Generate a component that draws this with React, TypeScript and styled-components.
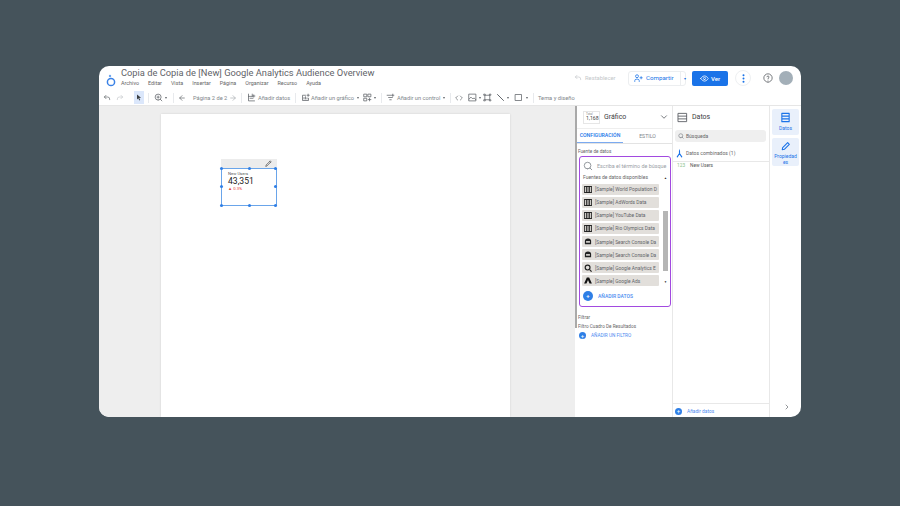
import React from "react";
import styled, { createGlobalStyle } from "styled-components";

const Global = createGlobalStyle`
  html, body { margin: 0; padding: 0; background: #45535b; font-family: Roboto, "Liberation Sans", sans-serif; }
  * { box-sizing: border-box; }
`;
const Stage = styled.div`
  width: 900px; height: 506px; padding: 66px 99px 89px; background: #45535b; overflow: hidden;
`;
const Win = styled.div`
  width: 702px; height: 351px; background: #fff; border-radius: 10px; overflow: hidden;
  display: flex; flex-direction: column;
`;
const Header = styled.header`
  height: 24px; display: flex; align-items: center; flex: none;
`;
const Logo = styled.div`
  width: 22px; flex: none; display: flex; justify-content: center; padding: 5px 0 0 2px;
`;
const TitleBlock = styled.div`
  flex: 1; align-self: flex-start; display: flex; flex-direction: column; padding-top: 1px;
`;
const Title = styled.div`
  font-size: 9.3px; line-height: 12px; color: #5f6368; white-space: nowrap;
`;
const Menu = styled.div`
  display: flex; gap: 9px; font-size: 5.4px; line-height: 9px; color: #666;
`;
const HeadActions = styled.div`
  display: flex; align-items: center; height: 24px;
`;
const Reset = styled.div`
  display: flex; align-items: center; gap: 3px; font-size: 5.8px; color: #c4c7ca; margin-right: 11px; width: 43px; white-space: nowrap;
`;
const Share = styled.div`
  width: 58px; height: 15px; border: 1px solid #eceef0; border-radius: 3px; display: flex; align-items: center;
  color: #1a73e8; font-size: 6.2px; font-weight: 400; padding-left: 5px; gap: 3px; margin-right: 6px; white-space: nowrap;
`;
const ShareCaret = styled.span`
  margin-left: 3px; padding-left: 3px; border-left: 1px solid #eceef0; font-size: 4px; line-height: 13px; color: #1a73e8;
`;
const View = styled.div`
  width: 36px; height: 15px; background: #1a73e8; border-radius: 2px; color: #fff; font-size: 6px; font-weight: 500;
  display: flex; align-items: center; justify-content: center; gap: 2px; margin-right: 7px;
`;
const More = styled.div`
  width: 16px; height: 16px; border-radius: 50%; border: 1px solid #eef0f2; display: flex; align-items: center;
  justify-content: center; margin-right: 12px;
`;
const Avatar = styled.div`
  width: 14px; height: 14px; border-radius: 50%; background: #a3afb8; margin: 0 8px 0 6px;
`;
const Toolbar = styled.div`
  height: 16px; flex: none; display: flex; align-items: center; font-size: 5.7px; color: #80868b;
  border-bottom: 1px solid #e6e6e6; padding-left: 4px; white-space: nowrap;
`;
const Sep = styled.span<{ $m?: number }>`
  width: 1px; height: 10px; background: #e8eaed; margin: 0 ${(p) => p.$m ?? 4}px; flex: none;
`;
const ToolText = styled.span<{ $ml?: number; $w?: number }>`
  margin-left: ${(p) => p.$ml ?? 0}px; ${(p) => (p.$w ? `width:${p.$w}px;` : "")}
`;
const IconSlot = styled.span<{ $w?: number; $active?: boolean; $ml?: number; $mr?: number }>`
  width: ${(p) => p.$w ?? 12}px; height: 13px; display: inline-flex; align-items: center; justify-content: center; flex: none;
  margin-left: ${(p) => p.$ml ?? 0}px; margin-right: ${(p) => p.$mr ?? 0}px;
  background: ${(p) => (p.$active ? "#dbe7fb" : "transparent")}; color: #5f6368;
`;
const Caret = styled.span`
  width: 0; height: 0; border-left: 1.5px solid transparent; border-right: 1.5px solid transparent;
  border-top: 2px solid #5f6368; display: inline-block; flex: none; margin: 0 2px;
`;
const Main = styled.div`
  flex: 1; display: flex; min-height: 0;
`;
const Canvas = styled.div`
  width: 476px; flex: none; background: #eeeeee; padding: 8px 0 0 62px; position: relative;
`;
const Page = styled.div`
  width: 349px; height: 303px; background: #fff; position: relative;
  box-shadow: 0 0 2px rgba(0,0,0,.12);
`;
const ChartBar = styled.div`
  position: absolute; left: 60px; top: 45px; width: 56px; height: 9px; background: #ececec;
  display: flex; justify-content: flex-end; align-items: center; padding-right: 5px;
`;
const Scorecard = styled.div`
  position: absolute; left: 60px; top: 54px; width: 56px; height: 38px; border: 1px solid #6aa5ea; padding: 2px 0 0 6px;
`;
const Handle = styled.i<{ $x: number; $y: number }>`
  position: absolute; width: 3px; height: 3px; background: #2f7fe6; border-radius: 50%;
  left: ${(p) => p.$x}px; top: ${(p) => p.$y}px;
`;
const CardLabel = styled.div`
  font-size: 4.2px; line-height: 5px; color: #555;
`;
const CardValue = styled.div`
  font-size: 8.6px; line-height: 10px; color: #222;
`;
const CardDelta = styled.div`
  font-size: 4.2px; line-height: 6px; color: #e8453c;
`;
const Scroll = styled.div`
  width: 2px; flex: none; background: linear-gradient(#a9a9a9 0 222px, #fff 222px);
`;
const Props = styled.section`
  width: 96px; flex: none; border-right: 1px solid #e8e8e8; display: flex; flex-direction: column;
`;
const PropHead = styled.div`
  height: 22px; display: flex; align-items: center; padding: 0 3px 0 6px; flex: none;
`;
const Mini = styled.div`
  width: 17px; height: 13px; border: 1px solid #e6e6e6; font-size: 5.2px; line-height: 5px; color: #444; padding: 1px 0 0 2px;
`;
const MiniTop = styled.div`
  font-size: 3px; line-height: 3px; color: #888;
`;
const PropName = styled.div`
  flex: 1; font-size: 7px; color: #3c4043; margin-left: 4px;
`;
const Tabs = styled.div`
  height: 16px; display: flex; border-bottom: 1px solid #e3e3e3; border-top: 1px solid #eee; flex: none; font-size: 5.2px; color: #80868b;
`;
const Tab = styled.div<{ $on?: boolean }>`
  width: ${(p) => (p.$on ? 46 : 49)}px; display: flex; align-items: center; justify-content: center; padding-bottom: 1px;
  color: ${(p) => (p.$on ? "#1a73e8" : "#80868b")}; font-weight: ${(p) => (p.$on ? 500 : 400)};
  border-bottom: ${(p) => (p.$on ? "1.5px solid #7baaf0" : "none")};
`;
const SmallLabel = styled.div`
  font-size: 4.7px; line-height: 7px; color: #666; padding-left: 1px;
`;
const PropBody = styled.div`
  padding: 4px 0 0 0;
`;
const Picker = styled.div`
  margin: 1px 0 0 2px; width: 92px; height: 151px; border: 1.5px solid #a24ae0; border-radius: 3px;
  display: flex; flex-direction: column; padding: 3.5px 0 0 2px; background: #fff; position: relative;
`;
const SearchRow = styled.div`
  display: flex; align-items: center; gap: 4px; padding-left: 1px; height: 11px; font-size: 5.4px; color: #9aa0a6; white-space: nowrap;
`;
const PickTitle = styled.div`
  font-size: 5px; line-height: 7px; color: #666; margin: 2px 0 3px 1px;
`;
const Source = styled.div`
  width: 77px; height: 11px; margin-bottom: 2.15px; background: #e2dfdb; border-radius: 1px; display: flex; align-items: center;
  padding-left: 2px; gap: 3px; font-size: 4.9px; color: #5f6368; white-space: nowrap; flex: none;
`;
const ScrollTrack = styled.div`
  position: absolute; right: 2px; top: 19px; width: 5px; height: 109px; display: flex; flex-direction: column; align-items: center;
  justify-content: space-between;
`;
const ScrollThumb = styled.div`
  position: absolute; left: 0; top: 35px; width: 5px; height: 60px; background: #b5b5b5;
`;
const ScrollArrow = styled.span`
  font-size: 3px; line-height: 5px; color: #222;
`;
const AddRow = styled.div`
  display: flex; align-items: center; gap: 5px; color: #4c8bf0; font-size: 5px; font-weight: 500; white-space: nowrap;
`;
const PickerAdd = styled(AddRow)`
  margin-top: 2px; padding-left: 1px;
`;
const PlusDot = styled.span<{ $d?: number }>`
  width: ${(p) => p.$d ?? 9}px; height: ${(p) => p.$d ?? 9}px; border-radius: 50%; background: #2f7fe6; color: #fff; flex: none;
  display: inline-flex; align-items: center; justify-content: center; font-size: 6px; line-height: 1;
`;
const Filter = styled.div`
  padding: 7px 0 0 0; display: flex; flex-direction: column; gap: 2px;
`;
const FilterAdd = styled(AddRow)`
  padding: 0 0 0 2px; font-size: 4.7px; font-weight: 400;
`;
const Data = styled.section`
  width: 97px; flex: none; border-right: 1px solid #e8e8e8; display: flex; flex-direction: column;
`;
const DataHead = styled.div`
  height: 22px; display: flex; align-items: center; gap: 4px; padding-left: 4px; font-size: 7px; color: #3c4043; flex: none;
`;
const DataSearch = styled.div`
  margin: 2px 3px 0 2px; height: 12px; background: #efefef; border-radius: 3px; display: flex; align-items: center; gap: 2px;
  padding-left: 3px; font-size: 5px; color: #666; flex: none;
`;
const Blended = styled.div`
  height: 17px; margin-top: 3px; display: flex; align-items: center; gap: 2px; padding-left: 2px; font-size: 5px; color: #666;
  border-bottom: 1px solid #e8e8e8; flex: none;
`;
const Field = styled.div`
  flex: 1; padding: 1px 0 0 4px; font-size: 4.8px; color: #555; display: flex; gap: 5px;
`;
const FieldTag = styled.span`
  color: #8bc28b;
`;
const DataFoot = styled(AddRow)`
  height: 14px; border-top: 1px solid #e8e8e8; padding: 1px 0 0 2px; font-size: 4.8px; font-weight: 400; flex: none;
`;
const Rail = styled.aside`
  flex: 1; display: flex; flex-direction: column; align-items: center; padding-top: 3px; gap: 3px; position: relative;
`;
const RailBtn = styled.div<{ $h: number }>`
  width: 27px; height: ${(p) => p.$h}px; background: #e9f0fb; border-radius: 2px; color: #1a73e8; font-size: 5px; line-height: 6px;
  display: flex; flex-direction: column; align-items: center; text-align: center; padding-top: 3px; gap: 2px;
`;
const Chevron = styled.div`
  position: absolute; left: 13px; bottom: 6px; color: #5f6368; display: flex;
`;

const I = ({ d, s = 9, c = "#5f6368", w = 2 }: { d: string; s?: number; c?: string; w?: number }) => (
  <svg width={s} height={s} viewBox="0 0 24 24" fill="none" stroke={c} strokeWidth={w} strokeLinecap="round" strokeLinejoin="round" style={{ flex: "none" }}>
    <path d={d} />
  </svg>
);
const TableIcon = () => (
  <svg width="8" height="7" viewBox="0 0 10 9" style={{ flex: "none" }}>
    <rect width="10" height="9" fill="#1d1d1d" />
    <rect x="1" y="1.2" width="1.7" height="6.6" fill="#cfccc8" />
    <rect x="4.1" y="1.2" width="1.7" height="6.6" fill="#cfccc8" />
    <rect x="7.3" y="1.2" width="1.7" height="6.6" fill="#cfccc8" />
  </svg>
);
const CloudIcon = () => (
  <svg width="8" height="7" viewBox="0 0 10 9" style={{ flex: "none" }}>
    <path d="M1 8V4a4 3.5 0 0 1 8 0v4z" fill="#222" />
    <rect x="2.5" y="4" width="5" height="2" fill="#e2dfdb" />
  </svg>
);
const SearchGlass = () => (
  <svg width="8" height="8" viewBox="0 0 10 10" fill="none" stroke="#222" strokeWidth="1.5" style={{ flex: "none" }}>
    <circle cx="4.5" cy="4.5" r="3" />
    <path d="M7 7l2.5 2.5" />
  </svg>
);
const AdsIcon = () => (
  <svg width="8" height="7" viewBox="0 0 10 9" style={{ flex: "none" }}>
    <path d="M3.5 0.5h3L10 8.5H7L5 4 3 8.5H0z" fill="#111" />
  </svg>
);

const sources: [string, React.ReactNode][] = [
  ["[Sample] World Population D", <TableIcon key="a" />],
  ["[Sample] AdWords Data", <TableIcon key="b" />],
  ["[Sample] YouTube Data", <TableIcon key="c" />],
  ["[Sample] Rio Olympics Data", <TableIcon key="d" />],
  ["[Sample] Search Console Da", <CloudIcon key="e" />],
  ["[Sample] Search Console Da", <CloudIcon key="f" />],
  ["[Sample] Google Analytics E", <SearchGlass key="g" />],
  ["[Sample] Google Ads", <AdsIcon key="h" />],
];
const menus = ["Archivo", "Editar", "Vista", "Insertar", "Página", "Organizar", "Recurso", "Ayuda"];
const handles: [number, number][] = [[-2, -2], [26, -2], [52, -2], [-2, 16], [52, 16], [-2, 35], [26, 35], [52, 35]];

export default function App() {
  return (
    <Stage>
      <Global />
      <Win>
        <Header>
          <Logo>
            <svg width="10" height="13" viewBox="0 0 10 13" fill="none">
              <circle cx="5" cy="8" r="3.6" stroke="#3b82e6" strokeWidth="1.5" />
              <circle cx="4" cy="2" r="1.2" fill="#6ea6ee" />
            </svg>
          </Logo>
          <TitleBlock>
            <Title>Copia de Copia de [New] Google Analytics Audience Overview</Title>
            <Menu>{menus.map((m) => <span key={m}>{m}</span>)}</Menu>
          </TitleBlock>
          <HeadActions>
            <Reset><I d="M9 14L4 9l5-5M4 9h10a6 6 0 0 1 6 6v2" s={8} c="#c4c7ca" />Restablecer</Reset>
            <Share>
              <I d="M14 20v-2a4 4 0 0 0-4-4H6a4 4 0 0 0-4 4v2M8 10a4 4 0 1 0 0-8 4 4 0 0 0 0 8M19 7v6M16 10h6" s={9} c="#1a73e8" />
              Compartir<ShareCaret>▾</ShareCaret>
            </Share>
            <View>
              <I d="M2 12s4-7 10-7 10 7 10 7-4 7-10 7-10-7-10-7zM12 15a3 3 0 1 0 0-6 3 3 0 0 0 0 6" s={9} c="#fff" />
              Ver
            </View>
            <More>
              <svg width="3" height="9" viewBox="0 0 3 9"><g fill="#1a73e8"><circle cx="1.5" cy="1.2" r="1" /><circle cx="1.5" cy="4.5" r="1" /><circle cx="1.5" cy="7.8" r="1" /></g></svg>
            </More>
            <I d="M12 22a10 10 0 1 0 0-20 10 10 0 0 0 0 20M9.5 9a2.5 2.5 0 0 1 4.9.8c0 1.7-2.4 2.2-2.4 3.7M12 17h0" s={10} />
            <Avatar />
          </HeadActions>
        </Header>
        <Toolbar>
          <IconSlot $w={8}><I d="M9 14L4 9l5-5M4 9h10a6 6 0 0 1 6 6v2" s={8} /></IconSlot>
          <IconSlot $w={18} $mr={5}><I d="M15 14l5-5-5-5M20 9H10a6 6 0 0 0-6 6v2" s={8} c="#c4c7ca" /></IconSlot>
          <IconSlot $w={10} $active>
            <svg width="6" height="7" viewBox="0 0 6 7"><path d="M1 0.5l4 3.2-1.8.2 1 2.2-.9.4-1-2.2L1 5.5z" fill="#3c4043" /></svg>
          </IconSlot>
          <Sep $m={4} />
          <IconSlot $w={10}><I d="M11 19a8 8 0 1 0 0-16 8 8 0 0 0 0 16M21 21l-4.3-4.3M11 8v6M8 11h6" s={9} /></IconSlot>
          <Caret />
          <Sep $m={3.5} />
          <IconSlot $w={10}><I d="M19 12H5M12 19l-7-7 7-7" s={8} /></IconSlot>
          <ToolText $ml={6} $w={36}>Página 2 de 2</ToolText>
          <IconSlot $w={8}><I d="M5 12h14M12 5l7 7-7 7" s={8} c="#a8acb0" /></IconSlot>
          <Sep $m={4.25} />
          <IconSlot $w={9}><I d="M4 3v18h16M4 9h10M14 3v6M18 5v6M15 8h6M8 14h8" s={9} /></IconSlot>
          <ToolText $ml={2.5} $w={32}>Añadir datos</ToolText>
          <Sep $m={4.5} />
          <IconSlot $w={10}><I d="M20 14v6H4V6h8M8 16v-4M12 16v-6M16 16v-3M19 3v6M16 6h6" s={9} /></IconSlot>
          <ToolText $ml={1} $w={44}>Añadir un gráfico</ToolText>
          <Caret />
          <IconSlot $w={10} $ml={1}><I d="M3 3h7v7H3zM14 3h7v7h-7zM3 14h7v7H3zM17.5 14v7M14 17.5h7" s={9} /></IconSlot>
          <Caret />
          <Sep $m={3} />
          <IconSlot $w={10}><I d="M3 6h18M7 12h10M10 18h4M18 3v6" s={9} /></IconSlot>
          <ToolText $ml={2} $w={44}>Añadir un control</ToolText>
          <Caret />
          <Sep $m={2.75} />
          <IconSlot $w={11}><I d="M8 6l-6 6 6 6M16 6l6 6-6 6" s={8} /></IconSlot>
          <IconSlot $w={9} $ml={3}><I d="M3 3h18v18H3zM3 16l5-5 5 5 3-3 5 5" s={9} /></IconSlot>
          <Caret />
          <IconSlot $w={9}><I d="M6 6h12v12H6zM3 3h3v3H3zM18 3h3v3h-3zM3 18h3v3H3zM18 18h3v3h-3z" s={9} /></IconSlot>
          <IconSlot $w={10} $ml={3.5}><I d="M4 4l16 16" s={9} w={2.6} /></IconSlot>
          <Caret />
          <IconSlot $w={11} $ml={1.5}><I d="M4 4h16v16H4z" s={9} /></IconSlot>
          <Caret />
          <Sep $m={3.75} />
          <ToolText>Tema y diseño</ToolText>
        </Toolbar>
        <Main>
          <Canvas>
            <Page>
              <ChartBar><I d="M3 21l1-4L16 5l3 3L7 20zM16 5l2-2 3 3-2 2" s={7} c="#333" /></ChartBar>
              <Scorecard>
                <CardLabel>New Users</CardLabel>
                <CardValue>43,351</CardValue>
                <CardDelta>▲ 0.3%</CardDelta>
                {handles.map(([x, y]) => <Handle key={`${x}-${y}`} $x={x} $y={y} />)}
              </Scorecard>
            </Page>
          </Canvas>
          <Scroll />
          <Props>
            <PropHead>
              <Mini><MiniTop>Total</MiniTop>1,168</Mini>
              <PropName>Gráfico</PropName>
              <I d="M6 9l6 6 6-6" s={10} />
            </PropHead>
            <Tabs>
              <Tab $on>CONFIGURACIÓN</Tab>
              <Tab>ESTILO</Tab>
            </Tabs>
            <PropBody>
              <SmallLabel>Fuente de datos</SmallLabel>
              <Picker>
                <SearchRow>
                  <I d="M11 19a8 8 0 1 0 0-16 8 8 0 0 0 0 16M21 21l-4.3-4.3" s={10} c="#80868b" />
                  Escriba el término de búsque
                </SearchRow>
                <PickTitle>Fuentes de datos disponibles</PickTitle>
                {sources.map(([t, ic], i) => <Source key={i}>{ic}{t}</Source>)}
                <ScrollTrack>
                  <ScrollArrow>▲</ScrollArrow>
                  <ScrollThumb />
                  <ScrollArrow>▼</ScrollArrow>
                </ScrollTrack>
                <PickerAdd><PlusDot $d={10}>+</PlusDot>AÑADIR DATOS</PickerAdd>
              </Picker>
              <Filter>
                <SmallLabel>Filtrar</SmallLabel>
                <SmallLabel>Filtro Cuadro De Resultados</SmallLabel>
                <FilterAdd><PlusDot $d={7}>+</PlusDot>AÑADIR UN FILTRO</FilterAdd>
              </Filter>
            </PropBody>
          </Props>
          <Data>
            <DataHead><I d="M3 3h18v18H3zM3 9h18M3 15h18" s={11} />Datos</DataHead>
            <DataSearch><I d="M11 19a8 8 0 1 0 0-16 8 8 0 0 0 0 16M21 21l-4.3-4.3" s={6} />Búsqueda</DataSearch>
            <Blended>
              <I d="M12 6v6M12 12l-6 9M12 12l6 9M12 3h0" s={9} c="#1a73e8" w={3} />
              Datos combinados (1)
            </Blended>
            <Field><FieldTag>123</FieldTag>New Users</Field>
            <DataFoot><PlusDot $d={7}>+</PlusDot>Añadir datos</DataFoot>
          </Data>
          <Rail>
            <RailBtn $h={26}>
              <I d="M4 3h16v18H4zM4 9h16M4 15h16" s={11} c="#1a73e8" w={2.4} />
              Datos
            </RailBtn>
            <RailBtn $h={28}>
              <I d="M3 21l1-5L16 4l4 4L8 20z" s={10} c="#1a73e8" w={2.6} />
              <span>Propiedad<br />es</span>
            </RailBtn>
            <Chevron><I d="M9 6l6 6-6 6" s={8} /></Chevron>
          </Rail>
        </Main>
      </Win>
    </Stage>
  );
}
